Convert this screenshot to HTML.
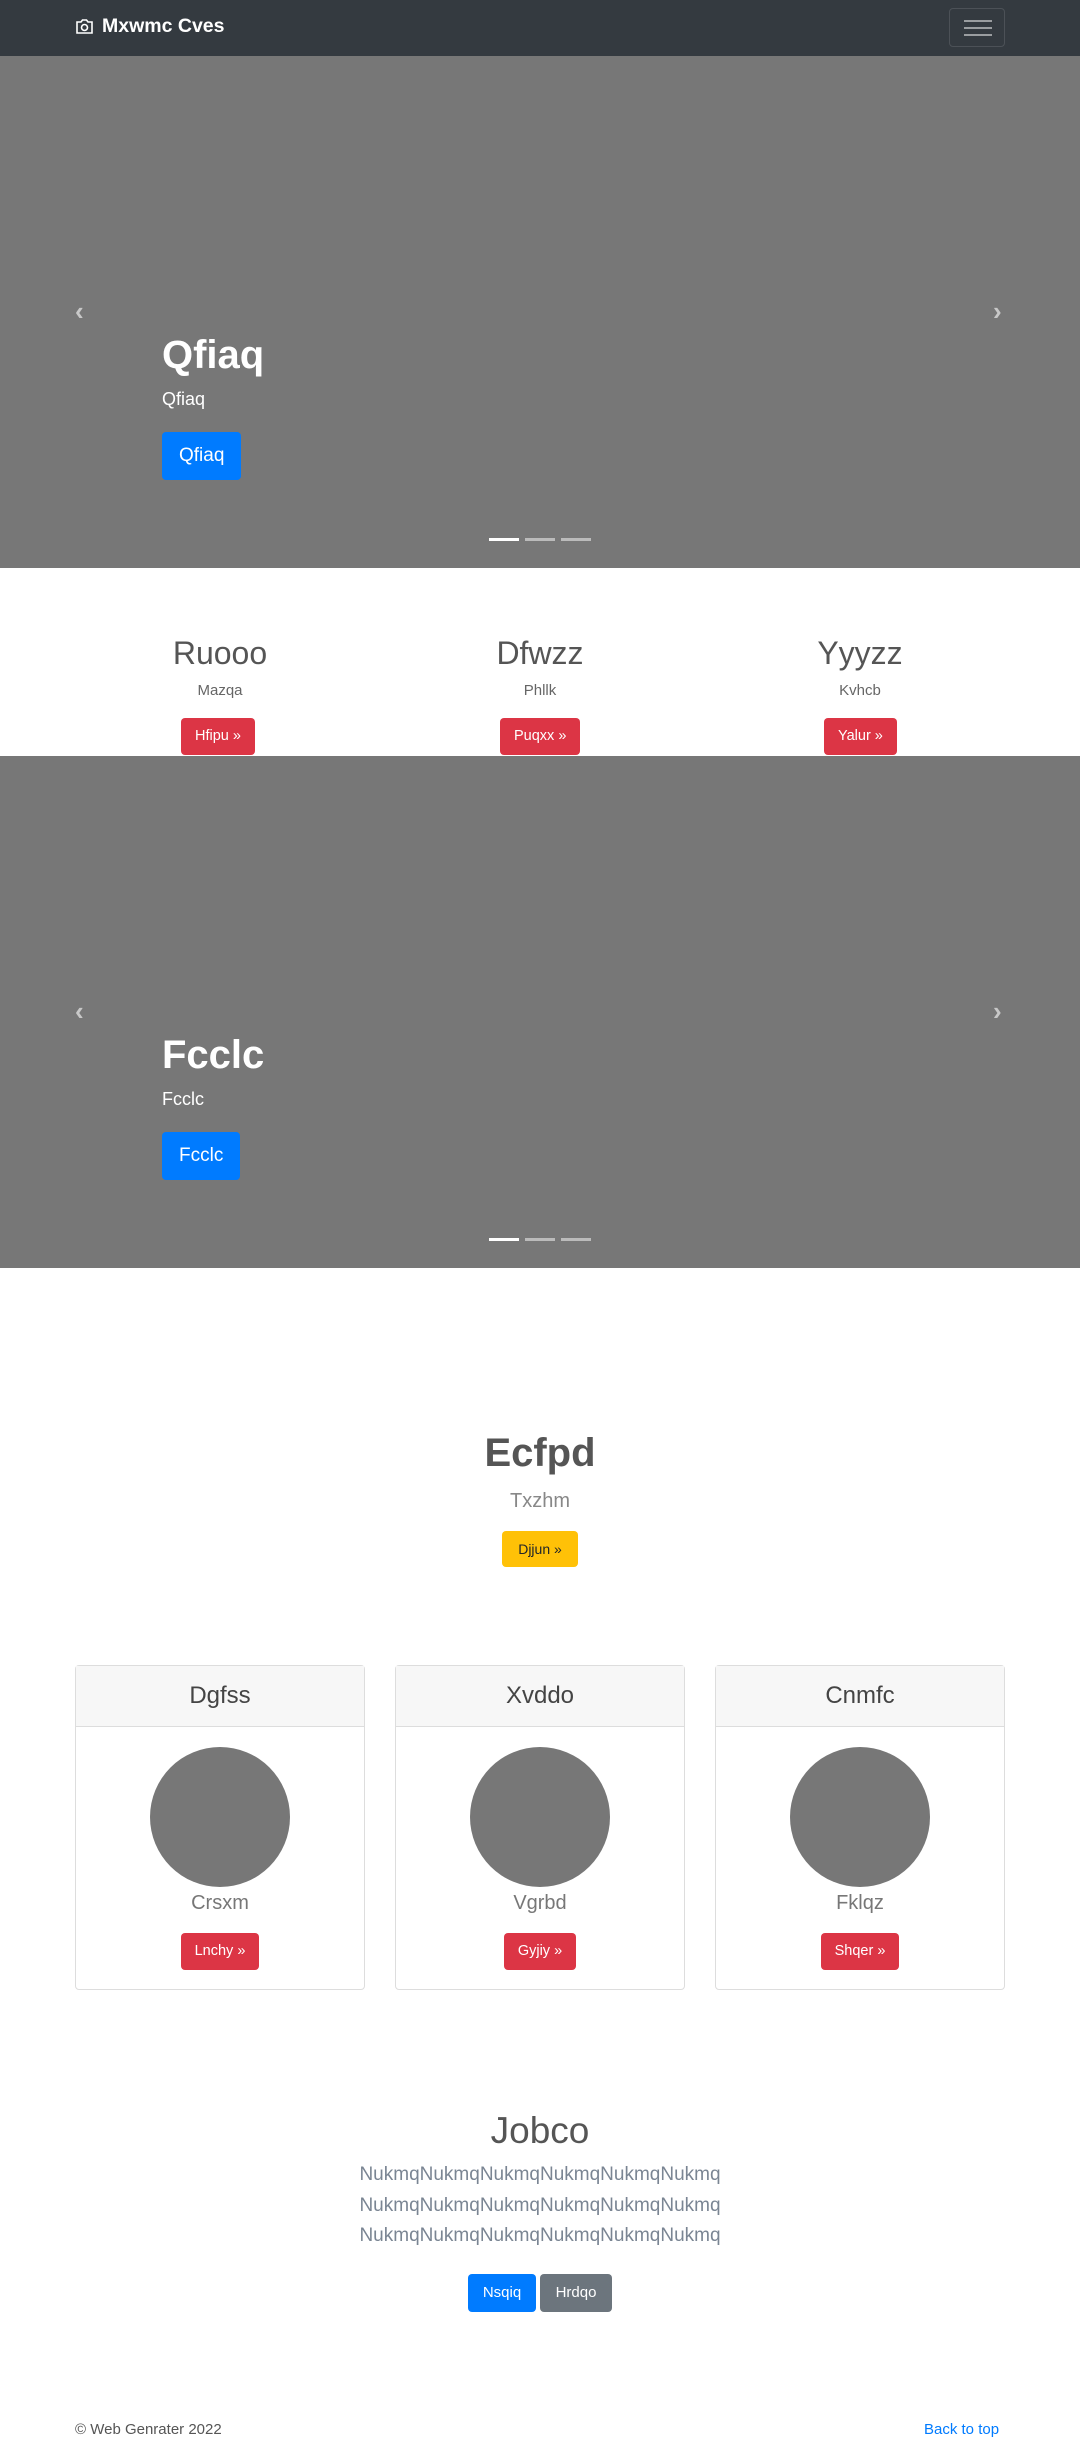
<!DOCTYPE html>
<html><head><meta charset="utf-8"><style>
*{box-sizing:border-box;margin:0;padding:0}
body{width:1080px;height:2440px;overflow:hidden;font-family:"Liberation Sans",sans-serif;color:#212529;background:#fff;position:relative}
.abs{position:absolute}
.nav{top:0;left:0;width:1080px;height:56px;background:#343a40}
.brand{left:75px;top:15px;color:#fff;font-weight:bold;font-size:19.5px;display:flex;align-items:center;gap:8px}
.tog{left:949px;top:8px;width:56px;height:39px;border:1px solid rgba(255,255,255,.12);border-radius:4px}
.tog i{position:absolute;left:14px;width:28px;height:2px;background:rgba(255,255,255,.5)}
.car{left:0;width:1080px;height:512px;background:#777}
.cap{left:162px;color:#fff}
.cap h1{font-size:40px;font-weight:bold;line-height:48px}
.cap p{font-size:18px;margin-top:10px}
.btnlg{display:inline-block;background:#007bff;color:#fff;font-size:19px;padding:13px 17px;border-radius:4px;margin-top:22px}
.arr{color:rgba(255,255,255,.6);font-size:26px;font-weight:bold}
.ind{left:489px;display:flex;gap:6px}
.ind i{width:30px;height:3px;background:rgba(255,255,255,.5)}
.ind i:first-child{background:#fff}
.col{width:320px;text-align:center}
.col h2{font-size:32px;font-weight:normal;color:#555;line-height:38px}
.col p{font-size:15px;color:#666;margin-top:10px}
.btnr{display:inline-block;background:#dc3545;color:#fff;font-size:14.5px;padding:9px 14px;border-radius:4px;line-height:19px}
.card{top:1665px;width:290px;height:325px;border:1px solid #ddd;border-radius:4px;text-align:center}
.card .h{height:61px;background:#f7f7f7;border-bottom:1px solid #ddd;font-size:24px;color:#444;line-height:60px}
.circ{width:140px;height:140px;border-radius:50%;background:#777;margin:20px auto 0}
.card p{font-size:20px;font-weight:300;color:#777;margin:5px 0 18px}
</style></head><body>
<div class="abs nav"></div>
<div class="abs brand"><svg width="19" height="17" viewBox="0 0 19 17" fill="none" stroke="#fff" stroke-width="1.6"><path d="M2 4h4l1.5-2h4L13 4h4v11H2z"/><circle cx="9.5" cy="9.5" r="3"/></svg>Mxwmc Cves</div>
<div class="abs tog"><i style="top:11px"></i><i style="top:18px"></i><i style="top:25px"></i></div>

<div class="abs car" style="top:56px"></div>
<div class="abs arr" style="left:75px;top:296px">&#8249;</div>
<div class="abs arr" style="left:993px;top:296px">&#8250;</div>
<div class="abs cap" style="top:331px"><h1>Qfiaq</h1><p>Qfiaq</p><span class="btnlg">Qfiaq</span></div>
<div class="abs ind" style="top:538px"><i></i><i></i><i></i></div>

<div class="abs col" style="left:60px;top:634px"><h2>Ruooo</h2><p>Mazqa</p></div>
<div class="abs col" style="left:380px;top:634px"><h2>Dfwzz</h2><p>Phllk</p></div>
<div class="abs col" style="left:700px;top:634px"><h2>Yyyzz</h2><p>Kvhcb</p></div>
<div class="abs btnr" style="left:181px;top:718px">Hfipu »</div>
<div class="abs btnr" style="left:500px;top:718px">Puqxx »</div>
<div class="abs btnr" style="left:824px;top:718px">Yalur »</div>

<div class="abs car" style="top:756px"></div>
<div class="abs arr" style="left:75px;top:996px">&#8249;</div>
<div class="abs arr" style="left:993px;top:996px">&#8250;</div>
<div class="abs cap" style="top:1031px"><h1>Fcclc</h1><p>Fcclc</p><span class="btnlg">Fcclc</span></div>
<div class="abs ind" style="top:1238px"><i></i><i></i><i></i></div>

<div class="abs" style="left:0;width:1080px;top:1428px;text-align:center">
<div style="font-size:40px;font-weight:bold;color:#555;line-height:50px">Ecfpd</div>
<div style="font-size:20px;font-weight:300;color:#888;margin-top:12px">Txzhm</div>
</div>
<div class="abs" style="left:502px;top:1531px;width:76px;height:36px;background:#ffc107;border-radius:4px;font-size:14px;line-height:36px;text-align:center;color:#212529">Djjun »</div>

<div class="abs card" style="left:75px"><div class="h">Dgfss</div><div class="circ"></div><p>Crsxm</p><span class="btnr">Lnchy »</span></div>
<div class="abs card" style="left:395px"><div class="h">Xvddo</div><div class="circ"></div><p>Vgrbd</p><span class="btnr">Gyjiy »</span></div>
<div class="abs card" style="left:715px"><div class="h">Cnmfc</div><div class="circ"></div><p>Fklqz</p><span class="btnr">Shqer »</span></div>

<div class="abs" style="left:0;width:1080px;top:2102px;text-align:center">
<div style="font-size:37px;font-weight:300;color:#555;line-height:58px">Jobco</div>
<div style="font-size:19px;font-weight:300;color:#7a8593;line-height:30.5px;margin-top:0">NukmqNukmqNukmqNukmqNukmqNukmq<br>NukmqNukmqNukmqNukmqNukmqNukmq<br>NukmqNukmqNukmqNukmqNukmqNukmq</div>
</div>
<div class="abs" style="left:468px;top:2274px;width:68px;height:38px;background:#007bff;border-radius:4px;color:#fff;font-size:15px;line-height:38px;text-align:center">Nsqiq</div>
<div class="abs" style="left:540px;top:2274px;width:72px;height:38px;background:#6c757d;border-radius:4px;color:#fff;font-size:15px;line-height:38px;text-align:center">Hrdqo</div>

<div class="abs" style="left:75px;top:2421px;font-size:15px;color:#555">© Web Genrater 2022</div>
<div class="abs" style="left:924px;top:2421px;font-size:15px;color:#007bff">Back to top</div>
</body></html>
